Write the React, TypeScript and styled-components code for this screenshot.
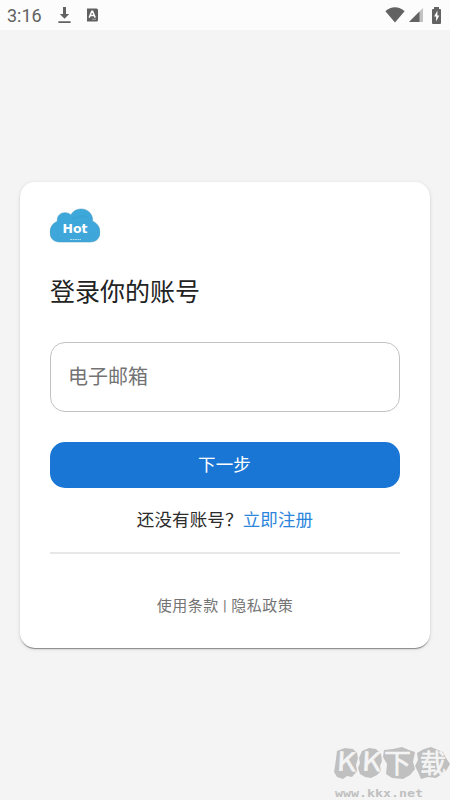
import React from 'react';
import styled, { createGlobalStyle } from 'styled-components';

const Global = createGlobalStyle`
  * { box-sizing: border-box; }
  body { margin: 0; background: #f4f4f4; font-family: Roboto, "Noto Sans CJK SC", sans-serif; }
`;
const Screen = styled.div`
  position: relative;
  height: 800px;
  display: flex;
  flex-direction: column;
  overflow: hidden;
  background: #f4f4f4;
`;
const StatusBar = styled.header`
  height: 30px;
  flex: none;
  display: flex;
  align-items: center;
  justify-content: space-between;
  padding: 0 9px 0 7px;
  background: #fcfcfc;
  color: #626262;
`;
const StatusGroup = styled.div<{ $gap: number }>`
  display: flex;
  align-items: center;
  gap: ${(p) => p.$gap}px;
  svg { display: block; }
`;
const Time = styled.span`
  width: 35px;
  font-size: 18px;
  line-height: 30px;
  padding-top: 1px;
  white-space: nowrap;
`;
const Main = styled.main`
  flex: 1;
  padding: 152px 20px 0;
`;
const Card = styled.section`
  height: 466px;
  padding: 24px 30px 0;
  display: flex;
  flex-direction: column;
  background: #fff;
  border-radius: 15px;
  box-shadow: 0 2px 1px -1px rgba(0, 0, 0, 0.28), 0 1px 1px rgba(0, 0, 0, 0.16), 0 1px 4px rgba(0, 0, 0, 0.12);
`;
const Logo = styled.svg`
  display: block;
  width: 50px;
  height: 40px;
  flex: none;
`;
const Title = styled.h1`
  margin: 29px 0 0;
  height: 34px;
  font-size: 25px;
  line-height: 35px;
  font-weight: 400;
  color: #222;
`;
const EmailField = styled.input`
  margin-top: 33px;
  width: 100%;
  height: 70px;
  flex: none;
  padding: 0 17px 3px;
  border: 1px solid #c2c2c2;
  border-radius: 15px;
  outline: none;
  background: #fff;
  font: 400 20px "Noto Sans CJK SC", sans-serif;
  &::placeholder { color: #737373; opacity: 1; }
`;
const NextButton = styled.button`
  margin-top: 30px;
  height: 46px;
  flex: none;
  border: 0;
  border-radius: 15px;
  padding: 0 1px 3px 0;
  background: #1976d5;
  color: #fff;
  font: 400 17.5px "Noto Sans CJK SC", sans-serif;
  letter-spacing: 0.2px;
`;
const Signup = styled.p`
  margin: 18px 0 0;
  height: 26px;
  line-height: 26px;
  text-align: center;
  font-size: 17.5px;
  letter-spacing: 0.15px;
  color: #2b2b2b;
  font-family: "Noto Sans CJK SC", sans-serif;
`;
const SignupLink = styled.a`
  color: #2b85dc;
`;
const Divider = styled.hr`
  width: 100%;
  margin: 20px 0 0;
  border: 0;
  height: 2px;
  flex: none;
  background: #e7e7e7;
`;
const Legal = styled.footer`
  margin-top: 40px;
  line-height: 25px;
  text-align: center;
  font-size: 15px;
  letter-spacing: 0.5px;
  color: #747474;
`;
const Watermark = styled.svg`
  position: absolute;
  left: 330px;
  top: 740px;
  width: 120px;
  height: 60px;
`;

export default function App() {
  return (
    <>
      <Global />
      <Screen>
        <StatusBar>
          <StatusGroup $gap={15}>
            <Time>3:16</Time>
            <svg width="15" height="18" viewBox="0 0 15 18" fill="#626262">
              <path d="M6 1h3v7h3.2L7.5 12.8 2.8 8H6zM1.4 15.2h12.2v1.7H1.4z" />
            </svg>
            <svg width="12" height="14" viewBox="0 0 12 14">
              <rect x="-1" y="0.5" width="12" height="13" rx="1.5" fill="#606060" />
              <path d="M2.2 9.6L4.8 3.3h0.8L8.2 9.6M3.3 7.6h4" stroke="#fff" strokeWidth="1.5" fill="none" />
              <path d="M5 11.2h4" stroke="#bbb" strokeWidth="0.8" />
            </svg>
          </StatusGroup>
          <StatusGroup $gap={4}>
            <svg width="20" height="16" viewBox="0 0 20 16" fill="#626262">
              <path d="M0.4 4.2C6-1 14-1 19.6 4.2L10 15.5z" />
            </svg>
            <svg width="14" height="14" viewBox="0 0 14 14">
              <path d="M0 14L14 0v14z" fill="#c2c2c2" />
              <path d="M0 14L10.5 3.5V14z" fill="#626262" />
            </svg>
            <svg width="14" height="17" viewBox="4 0 14 17">
              <path d="M11 2V0h5v2h1q1 0 1 1v13q0 1-1 1h-7q-1 0-1-1V3q0-1 1-1z" fill="#626262" />
              <path d="M14.4 3.5l-3.3 6h2v5l3.2-6.1h-1.9z" fill="#fff" />
            </svg>
          </StatusGroup>
        </StatusBar>
        <Main>
          <Card>
            <Logo viewBox="0 0 50 40" role="img" aria-label="Hot">
              <defs>
                <linearGradient id="cloud" x2="0" y2="1">
                  <stop offset="0" stopColor="#3ea8db" />
                  <stop offset="1" stopColor="#3fa6da" />
                </linearGradient>
              </defs>
              <path d="M10 36C3.5 36 0 32 0 26.5C0 21 3 17 7.2 15.5C7 9.5 10.4 6.7 15 6.7C17.5 6.7 19.3 7.4 20.8 9C23 5 26.6 3 31 3C38 3 43 8 42.6 15.2C47 17 50 21 50 26C50 32 46.5 36 40 36z" fill="url(#cloud)" stroke="#3993bd" strokeWidth="0.5" />
              <path d="M20 14C28 7 36 8 40 13C33 10 27 13 20 14z" fill="#329dcd" opacity="0.3" />
              <text x="25" y="27.2" textAnchor="middle" textLength="25" lengthAdjust="spacingAndGlyphs" fill="#fff" fontFamily="'DejaVu Sans'" fontWeight="700" fontSize="12.5">Hot</text>
              <path d="M20 33.5h11" stroke="#b5dff2" strokeWidth="0.9" strokeDasharray="2 .5" />
            </Logo>
            <Title>登录你的账号</Title>
            <EmailField type="email" placeholder="电子邮箱" />
            <NextButton>下一步</NextButton>
            <Signup>还没有账号？<SignupLink>立即注册</SignupLink></Signup>
            <Divider />
            <Legal>使用条款 | 隐私政策</Legal>
          </Card>
        </Main>
        <Watermark viewBox="0 0 120 60">
          <g fill="#c0c0c0">
            <path d="M7 11l5-2 3-1 8 1 4 4 1 5-2 7 1 6-5 6-5-1-4 3-6-2-3-5 1-6 1-7z" />
            <path d="M32 11l7-3 7 1 5 5 1 7-2 5 1 5-4 4-6 3-6-1-5-3-2-6 2-5-1-5z" />
            <path d="M54 10l9-1 9-2 7 3 6 2-2 10 2 7-5 6-7 4-11-1-6-4 1-10-4-7z" />
            <path d="M87 13l7-4 7-2 7 3 5 2 3 6 4 6-4 7-4 3-6 4-8-1-7 2-3-7-3-6 3-6z" />
          </g>
          <g fill="#f4f4f4" stroke="#f4f4f4" strokeWidth="0.6" fontFamily="'Noto Sans CJK SC', sans-serif">
            <text x="7" y="31" fontSize="26" textLength="19" lengthAdjust="spacingAndGlyphs" transform="rotate(3 16 22)">K</text>
            <text x="32" y="31" fontSize="26" textLength="19" lengthAdjust="spacingAndGlyphs" transform="rotate(3 41 22)">K</text>
            <text x="54" y="33" fontSize="27">下</text>
            <text x="90" y="33" fontSize="26">载</text>
          </g>
          <text x="5" y="57" textLength="88" lengthAdjust="spacingAndGlyphs" fill="#c0c0c0" fontFamily="'DejaVu Sans Mono'" fontWeight="700" fontSize="11">www.kkx.net</text>
        </Watermark>
      </Screen>
    </>
  );
}
